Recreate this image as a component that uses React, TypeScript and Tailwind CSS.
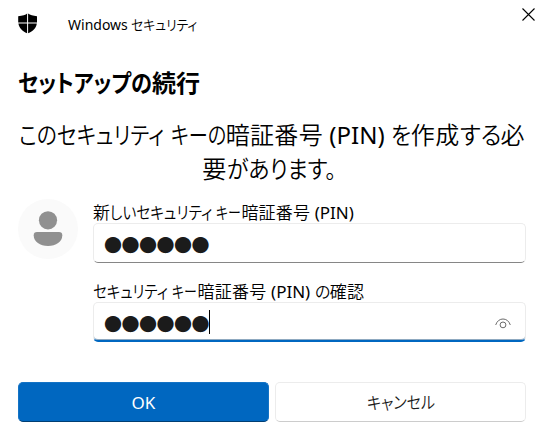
import { useLayoutEffect, useRef, useState } from "react"
import type { ReactNode } from "react"

interface KanaProps {
  className: string
  children: string
}

// squeezes a run of kana into the width given by className
function Kana({ className, children }: KanaProps) {
  const box = useRef<HTMLSpanElement>(null)
  const text = useRef<HTMLSpanElement>(null)
  const [scale, setScale] = useState(1)

  useLayoutEffect(() => {
    if (!box.current || !text.current) return
    setScale(box.current.offsetWidth / text.current.offsetWidth)
  }, [children])

  return (
    <span ref={box} className={`inline-block text-left tracking-normal whitespace-nowrap ${className}`}>
      <span ref={text} className="inline-block origin-left" style={{ transform: `scaleX(${scale})` }}>
        {children}
      </span>
    </span>
  )
}

function ShieldIcon() {
  return (
    <svg width="20" height="21" viewBox="0 0 20 21" className="shrink-0">
      <path
        d="M9.5 0.3C7.5 2 4.5 3 0.2 3.2V9.4H9.1V0.8zM10.1 0.6V9.4H19V3.2C15 3 12 2 10.1 0.6zM0.4 10.6C1 15 4.5 18.5 9.1 20.2V10.6zM10.1 10.6V20.2C15 18.5 18.4 15 18.8 10.6z"
        fill="#000"
      />
    </svg>
  )
}

function CloseIcon() {
  return (
    <svg width="13" height="13" viewBox="0 0 13 13">
      <path d="M0.5 0.5L12.5 12.5M12.5 0.5L0.5 12.5" stroke="#000" strokeWidth="1.1" fill="none" />
    </svg>
  )
}

function EyeIcon() {
  return (
    <svg width="16" height="11" viewBox="0 0 16 11" fill="none" stroke="#6a6a6a" strokeWidth="1">
      <path d="M0.8 6.6C2 3 4.8 1 8 1S14 3 15.2 6.6" strokeLinecap="round" />
      <circle cx="8" cy="6.9" r="2.9" />
    </svg>
  )
}

function Avatar() {
  return (
    <div className="h-[60px] w-[60px] shrink-0 rounded-full bg-[#fafafa]">
      <svg width="60" height="60" viewBox="0 0 60 60" fill="#909090">
        <circle cx="30" cy="21.3" r="9.1" />
        <path d="M19 33H41Q44.3 33 44.3 36.3C44.3 43 38 47 30 47S15.7 43 15.7 36.3Q15.7 33 19 33Z" />
      </svg>
    </div>
  )
}

interface PinFieldProps {
  label: ReactNode
  focused?: boolean
}

function PinField({ label, focused = false }: PinFieldProps) {
  return (
    <div>
      <div className="h-6 text-[17px] leading-[27px] font-[350] whitespace-nowrap">{label}</div>
      <div
        className={`flex h-10 items-center overflow-hidden rounded-[5px] border border-[#ececec] pr-3.5 pl-[10px] ${
          focused
            ? "border-b-2 border-b-[#0067c0] pt-px shadow-[inset_0_-1px_0_#8fa9c0]"
            : "border-b-[#868686]"
        }`}
      >
        <span className="pt-[3px] text-[18px] leading-none tracking-[-0.5px] text-[#1b1b1b]">●●●●●●</span>
        {focused && <span className="h-6 w-px bg-black" />}
        {focused && (
          <span className="ml-auto pt-[2px]">
            <EyeIcon />
          </span>
        )}
      </div>
    </div>
  )
}

export default function App() {
  return (
    <div className="h-[438px] w-[543px] overflow-hidden bg-white pr-[17px] pl-[18px] font-['Noto_Sans','Noto_Sans_CJK_JP',sans-serif] text-black [font-feature-settings:'palt']">
      <header className="-mr-[9px] flex h-[50px] items-start">
        <div className="pt-[13px]">
          <ShieldIcon />
        </div>
        <div className="ml-[30px] pt-[15px] text-[14px] leading-5 font-[350]">
          <span className="font-normal">Windows </span>
          <Kana className="w-[66px]">セキュリティ</Kana>
        </div>
        <div className="ml-auto pt-2">
          <CloseIcon />
        </div>
      </header>

      <h1 className="mt-[17px] h-[32px] text-[24px] leading-[32px] font-semibold">
        <Kana className="w-[134px]">セットアップの</Kana>続行
      </h1>

      <p className="-mx-2 mt-[19px] h-[69px] text-center text-[24px] leading-[34px] font-[350] tracking-[0.35px] whitespace-nowrap">
        <Kana className="w-[145px]">このセキュリティ</Kana> <Kana className="w-[55px]">キーの</Kana>
        暗証番号<span className="font-normal tracking-normal"> (PIN) </span>
        <Kana className="w-[20px]">を</Kana>作成<Kana className="w-[41px]">する</Kana>必
        <br />
        要<Kana className="mr-[6px] w-[109px]">があります。</Kana>
      </p>

      <div className="mt-3 flex gap-[15px]">
        <Avatar />
        <div className="flex flex-1 flex-col gap-[15px]">
          <PinField
            label={
              <>
                新<Kana className="w-[102px]">しいセキュリティ</Kana> <Kana className="w-[25px]">キー</Kana>
                <span className="tracking-[0.2px]">暗証番号</span>
                <span className="font-normal"> (PIN)</span>
              </>
            }
          />
          <PinField
            focused
            label={
              <>
                <Kana className="w-[75px]">セキュリティ</Kana> <Kana className="w-[25px]">キー</Kana>
                <span className="tracking-[0.3px]">暗証番号</span>
                <span className="font-normal"> (PIN) </span>
                <Kana className="w-[15px]">の</Kana>
                <span className="tracking-[0.3px]">確認</span>
              </>
            }
          />
        </div>
      </div>

      <div className="mt-10 grid grid-cols-2 gap-1.5 text-[17px] font-[350]">
        <button className="h-10 rounded-[5px] border border-[#1473c5] border-b-[#003e73] bg-[#0067c0] pt-0.5 font-normal text-white">
          OK
        </button>
        <button className="h-10 rounded-[5px] border border-[#ececec] border-b-[#cccccc] bg-white pt-0.5 text-[#1b1b1b]">
          <Kana className="w-[68px]">キャンセル</Kana>
        </button>
      </div>
    </div>
  )
}
